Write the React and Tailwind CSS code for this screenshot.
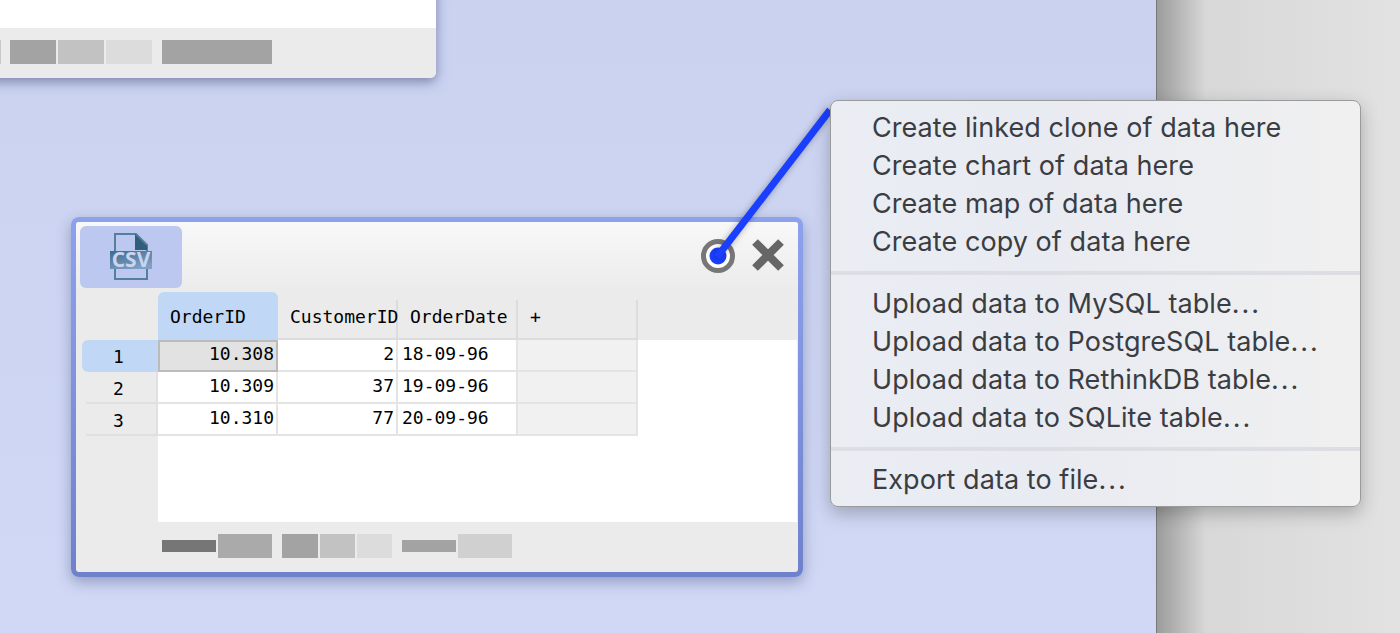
import React from "react";

const rows = [
  { n: 1, id: "10.308", customer: "2", date: "18-09-96", active: true },
  { n: 2, id: "10.309", customer: "37", date: "19-09-96" },
  { n: 3, id: "10.310", customer: "77", date: "20-09-96" },
];

const menuGroups = [
  ["Create linked clone of data here", "Create chart of data here", "Create map of data here", "Create copy of data here"],
  ["Upload data to MySQL table", "Upload data to PostgreSQL table", "Upload data to RethinkDB table", "Upload data to SQLite table"],
  ["Export data to file"],
];

function CsvIcon() {
  return (
    <svg width="42" height="48" viewBox="0 0 42 48">
      <defs>
        <linearGradient id="csvBand" x1="0" y1="0" x2="0.6" y2="1">
          <stop offset="0" stopColor="#3f6a88" />
          <stop offset="1" stopColor="#7f9fc6" />
        </linearGradient>
      </defs>
      <path d="M5 1H26L37 12V46H5Z" fill="none" stroke="#557f9c" strokeWidth="2" />
      <path d="M25 1L37 13V17H25Z" fill="#2f5f7c" />
      <path d="M0 18H42V36H0Z" fill="url(#csvBand)" />
      <text x="21" y="34" textAnchor="middle" fontFamily="Open Sans, sans-serif" fontWeight="700" fontSize="21" fill="#c9d5ee">
        CSV
      </text>
    </svg>
  );
}

function TargetIcon() {
  return (
    <svg width="34" height="34" viewBox="0 0 34 34">
      <circle cx="17" cy="17" r="14.5" fill="#fff" stroke="#777" strokeWidth="5" />
      <circle cx="17" cy="17" r="8.5" fill="#1a3fff" />
    </svg>
  );
}

function CloseIcon() {
  return (
    <svg width="32" height="32" viewBox="0 0 32 32">
      <path d="M3 3L29 29M29 3L3 29" stroke="#666" strokeWidth="8" />
    </svg>
  );
}

function TableWindow() {
  return (
    <div className="absolute left-[71px] top-[217px] w-[732px] h-[360px] p-[5px] rounded-lg bg-linear-to-b from-[#8da2ee] to-[#6f81cd] shadow-[0_5px_14px_rgba(60,70,120,0.4)]">
      <div className="flex flex-col h-full rounded-[3px] overflow-hidden bg-[#ebebeb] font-['DejaVu_Sans_Mono',monospace] text-[18px] text-black">
        {/* title bar */}
        <div className="flex h-[70px] shrink-0 bg-linear-to-b from-[#f8f8f8] to-[#ebebeb]">
          <div className="flex items-center justify-center w-[102px] h-[62px] mt-1 ml-1 rounded-md bg-[#bcc8ef]">
            <CsvIcon />
          </div>
          <div className="flex ml-auto mr-[14px] mt-[17px] gap-[17px] h-[34px]">
            <TargetIcon />
            <CloseIcon />
          </div>
        </div>

        {/* header row */}
        <div className="flex h-12 shrink-0">
          <div className="w-[82px]" />
          <div className="w-[120px] flex items-center pl-3 pt-0 rounded-t-md bg-[#c0d8f5]">OrderID</div>
          <div className="flex w-[360px] mt-2">
            <div className="w-[120px] pl-3 pt-[3px] border-r-2 border-b-2 border-[#dcdcdc] whitespace-nowrap">CustomerID</div>
            <div className="w-[120px] pl-3 pt-[3px] border-r-2 border-b-2 border-[#dcdcdc]">OrderDate</div>
            <div className="w-[120px] pl-3 pt-[3px] border-r-2 border-b-2 border-[#dcdcdc]">+</div>
          </div>
        </div>

        {/* body */}
        <div className="flex flex-1">
          <div className="w-[82px] shrink-0">
            {rows.map((r) => (
              <div
                key={r.n}
                className={
                  r.active
                    ? "h-8 ml-[6px] pl-[31px] pt-[3px] rounded-l-md bg-[#c0d8f5]"
                    : "h-8 ml-[10px] pl-[27px] pt-[3px] border-b-2 border-r-2 border-[#e0e0e0]"
                }
              >
                {r.n}
              </div>
            ))}
          </div>
          <div className="flex-1 mr-px bg-white">
            {rows.map((r) => (
              <div key={r.n} className="flex h-8 w-[480px] leading-[27px]">
                <div
                  className={
                    r.active
                      ? "w-[120px] pr-[2px] leading-[23px] text-right border-2 border-[#bbbbbb] bg-[#e2e2e2]"
                      : "w-[120px] pr-[2px] text-right border-r-2 border-b-2 border-[#e4e4e4]"
                  }
                >
                  {r.id}
                </div>
                <div className="w-[120px] pr-[2px] text-right border-r-2 border-b-2 border-[#e4e4e4]">{r.customer}</div>
                <div className="w-[120px] pl-1 border-r-2 border-b-2 border-[#e4e4e4]">{r.date}</div>
                <div className="w-[120px] border-r-2 border-b-2 border-[#e4e4e4] bg-[#f1f1f1]" />
              </div>
            ))}
          </div>
        </div>

        {/* footer swatches */}
        <div className="flex items-center h-[50px] shrink-0 pl-[86px] pb-[2px]">
          <div className="flex items-center gap-[2px]">
            <div className="w-[54px] h-3 bg-[#767676]" />
            <div className="w-[54px] h-6 bg-[#aaaaaa]" />
          </div>
          <div className="flex ml-[10px] gap-[2px]">
            <div className="w-[36px] h-6 bg-[#a3a3a3]" />
            <div className="w-[35px] h-6 bg-[#c2c2c2]" />
            <div className="w-[35px] h-6 bg-[#dcdcdc]" />
          </div>
          <div className="flex items-center ml-[10px] gap-[2px]">
            <div className="w-[54px] h-3 bg-[#a3a3a3]" />
            <div className="w-[54px] h-6 bg-[#d0d0d0]" />
          </div>
        </div>
      </div>
    </div>
  );
}

function OtherWindow() {
  return (
    <div className="absolute left-[-200px] top-[-100px] w-[636px] h-[178px] flex flex-col rounded-b-md overflow-hidden bg-white shadow-[0_4px_12px_rgba(60,70,120,0.55)]">
      <div className="flex-1" />
      <div className="flex items-center h-[50px] shrink-0 pl-[200px] pb-[2px] bg-[#ebebeb]">
        <div className="w-px h-6 bg-[#c8c8c8]" />
        <div className="flex ml-[9px] gap-[2px]">
          <div className="w-[46px] h-6 bg-[#a3a3a3]" />
          <div className="w-[46px] h-6 bg-[#c2c2c2]" />
          <div className="w-[46px] h-6 bg-[#dcdcdc]" />
        </div>
        <div className="w-[110px] h-6 ml-[10px] bg-[#a3a3a3]" />
      </div>
    </div>
  );
}

function ContextMenu() {
  return (
    <div className="absolute left-[830px] top-[100px] w-[531px] h-[407px] pt-2 rounded-lg border border-[#9a9a9a] bg-linear-to-r from-[#eaedf2] via-[#e9ebf2] via-40% to-[#f0f0f0] shadow-[0_6px_18px_rgba(0,0,0,0.25)] font-['Inter',sans-serif] text-[27px] tracking-[0.06px] leading-[38px] text-[#3a3d42]">
      {menuGroups.map((group, i) => (
        <div key={i} className={i > 0 ? "mt-[10px] border-t-4 border-[#dcdee3] pt-[10px]" : ""}>
          {group.map((label) => (
            <div key={label} className="pl-[41px] whitespace-nowrap">
              {label}
              {i > 0 && <span className="tracking-[2px]">...</span>}
            </div>
          ))}
        </div>
      ))}
    </div>
  );
}

export default function App() {
  return (
    <div className="relative flex w-[1400px] h-[633px] overflow-hidden bg-linear-to-b from-[#cad2f0] to-[#d0d8f5]">
      <div className="ml-auto w-[244px] h-full border-l border-[#777777] bg-linear-to-r from-[#9c9c9c] via-[#d8d8d8] via-20% to-[#e2e2e2]" />
      <OtherWindow />
      <TableWindow />
      {/* link from the target to the menu */}
      <svg className="absolute left-[700px] top-[90px] drop-shadow-[0_0_3px_rgba(0,0,0,0.3)]" width="140" height="180" viewBox="0 0 140 180">
        <path d="M17 167L130 20" stroke="#1a3fff" strokeWidth="7" />
      </svg>
      <ContextMenu />
    </div>
  );
}
